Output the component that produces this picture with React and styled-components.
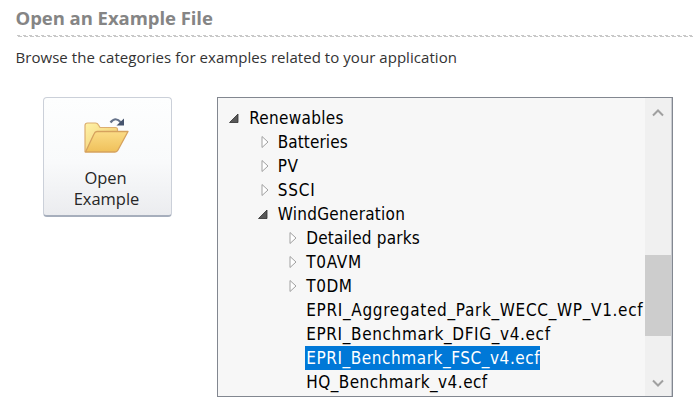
import React from 'react';
import styled, { createGlobalStyle } from 'styled-components';

const GlobalStyle = createGlobalStyle`
  * { box-sizing: border-box; }
  body { margin: 0; background: #fff; overflow: hidden; }
`;

const Page = styled.main`
  width: 695px;
  height: 412px;
  padding: 5px 0 0 16px;
  font-family: "Open Sans", "Noto Sans", sans-serif;
  color: #333;
`;

const Title = styled.h1`
  margin: 0 0 0 -0.5px;
  height: 30px;
  font-size: 18.5px;
  line-height: 26px;
  font-weight: 700;
  letter-spacing: -0.05px;
  color: #858585;
`;

const Divider = styled.svg`
  display: block;
  width: 677px;
  height: 2px;
`;

const Intro = styled.p`
  margin: 9px 0 0 -0.5px;
  height: 51px;
  font-size: 15px;
  line-height: 22px;
  letter-spacing: 0.05px;
`;

const Content = styled.div`
  display: flex;
  align-items: flex-start;
  gap: 45px;
  padding-left: 27px;
`;

const OpenButton = styled.button`
  display: flex;
  flex-direction: column;
  align-items: center;
  width: 129px;
  height: 120px;
  padding: 18px 2px 0 0;
  border: 1px solid #cbd0d9;
  border-bottom: 2px solid #a6aebc;
  border-radius: 4px;
  background: linear-gradient(#fdfefe, #f9fafb 55%, #ebecef);
  font-family: inherit;
  font-size: 16.5px;
  line-height: 21px;
  letter-spacing: -0.02px;
  color: #262626;
`;

const FirstLine = styled.span`
  padding-right: 2px;
`;

const FolderArt = styled.svg`
  display: block;
  width: 48px;
  height: 40px;
  margin: 0 1px 11px 0;
`;

const TreeBox = styled.section`
  display: flex;
  width: 456px;
  height: 300px;
  border: 1px solid #828790;
  background: #f7f7f7;
`;

const Tree = styled.ul`
  flex: 1;
  min-width: 0;
  margin: 0;
  padding: 8px 0 0;
  list-style: none;
  overflow: hidden;
  font-family: "DejaVu Sans Condensed", "DejaVu Sans", sans-serif;
  font-size: 17px;
  line-height: 24px;
  color: #000;
`;

const Row = styled.li`
  display: flex;
  align-items: center;
  height: 24px;
  padding-left: ${(p) => 10 + p.$depth * 28.5}px;
  white-space: nowrap;
`;

const Toggle = styled.svg`
  flex: none;
  width: 14px;
  height: 14px;
  margin-right: 6px;
`;

const Label = styled.span`
  height: 24px;
  padding: 0 0 0 1.2px;
  letter-spacing: ${(p) => p.$tracking}px;
  background: ${(p) => (p.$selected ? '#0078d7' : 'transparent')};
  color: ${(p) => (p.$selected ? '#fff' : 'inherit')};
`;

const Scrollbar = styled.div`
  display: flex;
  flex-direction: column;
  width: 27px;
  background: #f0f0f0;
  border-right: 1px solid #c8cbd0;
`;

const ArrowButton = styled.svg`
  flex: none;
  display: block;
  width: 26px;
  height: 30px;
`;

const Track = styled.div`
  flex: 1;
  padding-top: 127px;
`;

const Thumb = styled.div`
  width: 26px;
  height: 81px;
  background: #cdcdcd;
`;

const rows = [
  { text: 'Renewables', depth: 0, state: 'open', tracking: 0.29 },
  { text: 'Batteries', depth: 1, state: 'closed', tracking: 0.1 },
  { text: 'PV', depth: 1, state: 'closed', tracking: 0.6 },
  { text: 'SSCI', depth: 1, state: 'closed', tracking: 0.85 },
  { text: 'WindGeneration', depth: 1, state: 'open', tracking: 0.27 },
  { text: 'Detailed parks', depth: 2, state: 'closed', tracking: 0.17 },
  { text: 'T0AVM', depth: 2, state: 'closed', tracking: 0.7 },
  { text: 'T0DM', depth: 2, state: 'closed', tracking: 0.6 },
  { text: 'EPRI_Aggregated_Park_WECC_WP_V1.ecf', depth: 2, tracking: 0.68 },
  { text: 'EPRI_Benchmark_DFIG_v4.ecf', depth: 2, tracking: 0.64 },
  { text: 'EPRI_Benchmark_FSC_v4.ecf', depth: 2, tracking: 0.57, selected: true },
  { text: 'HQ_Benchmark_v4.ecf', depth: 2, tracking: 0.46 },
];

function ToggleIcon({ state }) {
  return (
    <Toggle viewBox="0 0 14 14">
      {state === 'open' && (
        <path d="M10 3v8.500H1.500z" fill="#595959" stroke="#303030" strokeWidth="0.8" />
      )}
      {state === 'closed' && (
        <path d="M5 1.500v11l6-5.500z" fill="#fff" stroke="#a0a0a0" strokeWidth="1" />
      )}
    </Toggle>
  );
}

function FolderIcon() {
  return (
    <FolderArt viewBox="0 0 48 40">
      <defs>
        <linearGradient id="back" x1="0" y1="0" x2="1" y2="1">
          <stop offset="0" stopColor="#fff3a8" />
          <stop offset="1" stopColor="#eec567" />
        </linearGradient>
        <linearGradient id="front" x1="0" y1="0" x2="0" y2="1">
          <stop offset="0" stopColor="#fbdc86" />
          <stop offset="1" stopColor="#efc05a" />
        </linearGradient>
      </defs>
      <path d="M3 35.500V9.500q0-2.500 2.500-2.500h8q2 0 3 2l1.500 2.500h15.500q2 0 2 2V34z" fill="url(#back)" stroke="#dcae70" strokeWidth="1.200" />
      <path d="M3.500 36l8.500-18q1-2.500 3-2.500h31l-10 18.500q-1 2-3 2z" fill="url(#front)" stroke="#d6a25e" strokeWidth="1.300" strokeLinejoin="round" />
      <path d="M28.500 6.500q5-6.500 10.500 0" fill="none" stroke="#66738a" strokeWidth="2.200" />
      <path d="M42 2.500v7h-7.500z" fill="#46546e" />
    </FolderArt>
  );
}

export default function App() {
  return (
    <Page>
      <GlobalStyle />
      <Title>Open an Example File</Title>
      <Divider>
        <path d="M1 0.500H677" stroke="#c8c8c8" strokeDasharray="3 3" />
        <path d="M2 1.500H677" stroke="#c8c8c8" strokeDasharray="4 2" />
      </Divider>
      <Intro>Browse the categories for examples related to your application</Intro>
      <Content>
        <OpenButton>
          <FolderIcon />
          <FirstLine>Open</FirstLine>
          <span>Example</span>
        </OpenButton>
        <TreeBox>
          <Tree>
            {rows.map((row) => (
              <Row key={row.text} $depth={row.depth}>
                <ToggleIcon state={row.state} />
                <Label $tracking={row.tracking} $selected={row.selected}>{row.text}</Label>
              </Row>
            ))}
          </Tree>
          <Scrollbar>
            <ArrowButton viewBox="0 0 26 30">
              <path d="M8 17.500l5-5 5 5" fill="none" stroke="#a0a0a0" strokeWidth="2" />
            </ArrowButton>
            <Track><Thumb /></Track>
            <ArrowButton viewBox="0 0 26 30">
              <path d="M8 14.500l5 5 5-5" fill="none" stroke="#a0a0a0" strokeWidth="2" />
            </ArrowButton>
          </Scrollbar>
        </TreeBox>
      </Content>
    </Page>
  );
}
